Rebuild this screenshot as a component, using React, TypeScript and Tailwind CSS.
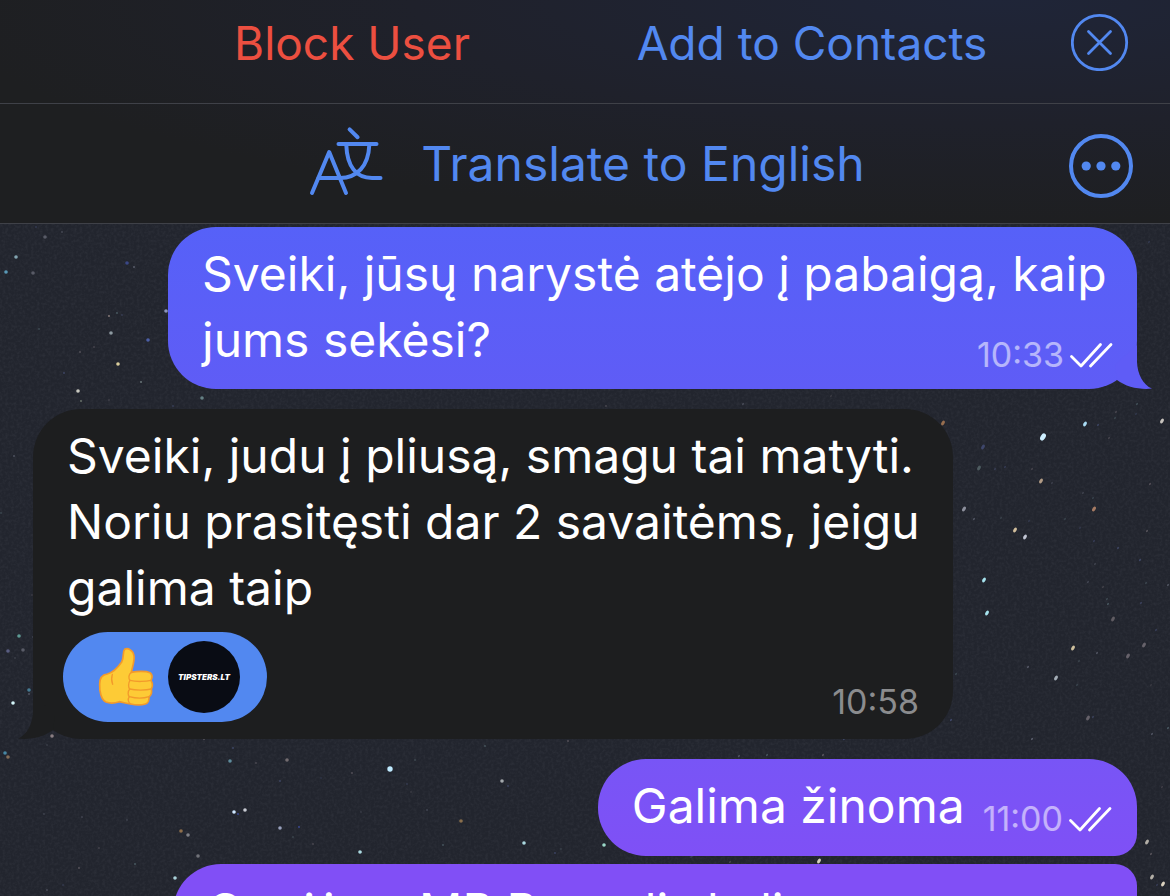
import type { ReactNode } from "react";

type Star = { x: number; y: number; r: number; color: string; opacity: number };

const STARS: Star[] = [
  { x: 1043, y: 437, r: 3, color: "#cdeeff", opacity: 1 },
  { x: 1085, y: 424, r: 2, color: "#a9dcf5", opacity: 1 },
  { x: 1162, y: 421, r: 2, color: "#d9d4cd", opacity: 0.9 },
  { x: 1041, y: 481, r: 2, color: "#d6b99b", opacity: 0.8 },
  { x: 1094, y: 509, r: 2, color: "#c79070", opacity: 0.8 },
  { x: 964, y: 509, r: 2, color: "#b9bccb", opacity: 0.7 },
  { x: 1015, y: 530, r: 2, color: "#e5cfa9", opacity: 0.9 },
  { x: 1025, y: 537, r: 2, color: "#d3d7e6", opacity: 0.9 },
  { x: 984, y: 580, r: 2, color: "#a6e3ee", opacity: 1 },
  { x: 987, y: 613, r: 2, color: "#a6e3ee", opacity: 1 },
  { x: 1073, y: 648, r: 2, color: "#e0cfa8", opacity: 0.9 },
  { x: 1056, y: 678, r: 2, color: "#c4cfd8", opacity: 0.8 },
  { x: 1113, y: 619, r: 2, color: "#9c8f93", opacity: 0.5 },
  { x: 1128, y: 656, r: 2, color: "#a79ba3", opacity: 0.5 },
  { x: 1144, y: 645, r: 2, color: "#a79ba3", opacity: 0.5 },
  { x: 1088, y: 718, r: 2, color: "#a79ba3", opacity: 0.5 },
  { x: 979, y: 468, r: 2, color: "#77908f", opacity: 0.5 },
  { x: 983, y: 447, r: 2, color: "#5a68a8", opacity: 0.5 },
  { x: 943, y: 423, r: 2, color: "#c98d5c", opacity: 0.7 },
  { x: 1147, y: 842, r: 2, color: "#d8d2c6", opacity: 0.8 },
  { x: 1152, y: 877, r: 2, color: "#d8d2c6", opacity: 0.8 },
  { x: 1163, y: 884, r: 2, color: "#f0e6cf", opacity: 0.9 },
  { x: 16, y: 257, r: 2, color: "#9bc4d2", opacity: 0.8 },
  { x: 6, y: 272, r: 2, color: "#5fa6c6", opacity: 0.9 },
  { x: 45, y: 237, r: 2, color: "#8d909e", opacity: 0.5 },
  { x: 33, y: 273, r: 2, color: "#8d909e", opacity: 0.5 },
  { x: 127, y: 263, r: 2, color: "#40509c", opacity: 0.8 },
  { x: 166, y: 311, r: 2, color: "#a6b2e0", opacity: 0.8 },
  { x: 111, y: 333, r: 2, color: "#a7b7bd", opacity: 0.8 },
  { x: 109, y: 316, r: 1, color: "#bba79f", opacity: 0.7 },
  { x: 148, y: 340, r: 2, color: "#5166b4", opacity: 0.9 },
  { x: 118, y: 364, r: 2, color: "#efe0a9", opacity: 0.9 },
  { x: 78, y: 391, r: 2, color: "#dcdcd0", opacity: 0.9 },
  { x: 81, y: 401, r: 1, color: "#8f9c8c", opacity: 0.7 },
  { x: 141, y: 382, r: 1, color: "#a1b6b4", opacity: 0.6 },
  { x: 202, y: 398, r: 2, color: "#82a6aa", opacity: 0.7 },
  { x: 19, y: 636, r: 2, color: "#6bb8ae", opacity: 0.8 },
  { x: 8, y: 651, r: 2, color: "#7b80b8", opacity: 0.6 },
  { x: 23, y: 650, r: 2, color: "#8d909e", opacity: 0.5 },
  { x: 29, y: 690, r: 2, color: "#4e90ad", opacity: 0.8 },
  { x: 13, y: 703, r: 2, color: "#d4f6fa", opacity: 1 },
  { x: 52, y: 736, r: 2, color: "#b5a3a5", opacity: 0.7 },
  { x: 5, y: 753, r: 2, color: "#4f9fc0", opacity: 0.8 },
  { x: 8, y: 757, r: 2, color: "#ad8a68", opacity: 0.7 },
  { x: 230, y: 761, r: 2, color: "#78b7cb", opacity: 0.7 },
  { x: 390, y: 769, r: 3, color: "#bfeaff", opacity: 1 },
  { x: 287, y: 760, r: 2, color: "#a99b9b", opacity: 0.6 },
  { x: 502, y: 781, r: 2, color: "#c4c9cc", opacity: 0.8 },
  { x: 234, y: 812, r: 2, color: "#cfe8ff", opacity: 1 },
  { x: 245, y: 810, r: 2, color: "#d9dde4", opacity: 0.9 },
  { x: 238, y: 814, r: 1, color: "#4555b5", opacity: 0.8 },
  { x: 181, y: 831, r: 2, color: "#a98152", opacity: 0.8 },
  { x: 188, y: 835, r: 2, color: "#a5a5aa", opacity: 0.7 },
  { x: 198, y: 856, r: 2, color: "#a5a5aa", opacity: 0.6 },
  { x: 280, y: 828, r: 2, color: "#b6bfe0", opacity: 0.8 },
  { x: 299, y: 827, r: 1, color: "#4555b5", opacity: 0.8 },
  { x: 360, y: 852, r: 2, color: "#b9ecf3", opacity: 0.9 },
  { x: 461, y: 821, r: 2, color: "#b58d58", opacity: 0.7 },
  { x: 524, y: 843, r: 2, color: "#b9ecf3", opacity: 0.9 },
  { x: 604, y: 845, r: 2, color: "#a9ecd9", opacity: 0.9 },
  { x: 819, y: 861, r: 2, color: "#e8e2cc", opacity: 0.9 },
  { x: 175, y: 878, r: 2, color: "#b9e4ec", opacity: 0.9 },
];

function faintStars(count: number): Star[] {
  let seed = 7919;
  const next = () => {
    seed = (seed * 16807) % 2147483647;
    return seed / 2147483647;
  };
  const colors = ["#8f93a6", "#6f8b93", "#8a7f86", "#5d6aa0"];
  return Array.from({ length: count }, () => ({
    x: Math.round(next() * 1170),
    y: 226 + Math.round(next() * 670),
    r: 1,
    color: colors[Math.floor(next() * colors.length)],
    opacity: 0.2 + next() * 0.35,
  }));
}

const SKY = faintStars(330).concat(STARS);

function NightSky() {
  return (
    <svg
      className="absolute inset-0 h-full w-full"
      viewBox="0 0 1170 896"
      preserveAspectRatio="xMidYMid slice"
      aria-hidden="true"
    >
      <defs>
        <filter id="grain" x="0" y="0" width="100%" height="100%">
          <feTurbulence type="fractalNoise" baseFrequency="0.35" numOctaves="2" seed="4" />
          <feColorMatrix values="0 0 0 0 0.5  0 0 0 0 0.52  0 0 0 0 0.6  0.9 0 0 0 -0.35" />
        </filter>
      </defs>
      <rect width="1170" height="896" fill="#22252e" />
      <rect width="1170" height="896" filter="url(#grain)" opacity="0.14" />
      {SKY.map((s, i) => (
        <ellipse
          key={i}
          cx={s.x}
          cy={s.y}
          rx={s.x > 700 ? s.r * 0.8 : s.r * 0.9}
          ry={s.x > 700 ? s.r * 1.3 : s.r * 0.9}
          fill={s.color}
          opacity={s.opacity}
          transform={`rotate(${s.x > 700 ? 32 : 0} ${s.x} ${s.y})`}
        />
      ))}
    </svg>
  );
}

function CloseIcon() {
  return (
    <svg className="block size-[58px]" viewBox="0 0 58 58" fill="none" stroke="currentColor" aria-hidden="true">
      <circle cx="28.5" cy="29.5" r="27.2" strokeWidth="2.8" />
      <path d="M17.5 18.5 39.5 40.5M39.5 18.5 17.5 40.5" strokeWidth="2.8" strokeLinecap="round" />
    </svg>
  );
}

function MoreIcon() {
  return (
    <svg className="block size-16" viewBox="0 0 64 64" aria-hidden="true">
      <circle cx="32" cy="32" r="30" fill="none" stroke="currentColor" strokeWidth="4" />
      <circle cx="17.2" cy="32" r="4.6" fill="currentColor" />
      <circle cx="32" cy="32" r="4.6" fill="currentColor" />
      <circle cx="46.8" cy="32" r="4.6" fill="currentColor" />
    </svg>
  );
}

function TranslateIcon() {
  return (
    <svg
      className="mb-1.5 block h-[70px] w-[74px] shrink-0"
      viewBox="309 126 74 70"
      fill="none"
      stroke="currentColor"
      strokeWidth="4"
      strokeLinecap="round"
      strokeLinejoin="round"
      aria-hidden="true"
    >
      <path d="M312 193 329.2 152 346 193" />
      <path d="M318.5 178H340C357 178 368.5 166 369.3 145" />
      <path d="M346.3 145C347 166 356 178 372 178H380.5" />
      <path d="M338.5 144H376.5" />
      <path d="M349.6 129.4 357.6 137.2" />
    </svg>
  );
}

function DoubleCheck() {
  return (
    <svg
      className="block h-[26px] w-[44px]"
      viewBox="0 0 44 26"
      fill="none"
      stroke="#fff"
      strokeWidth="2.8"
      strokeLinecap="round"
      strokeLinejoin="round"
      role="img"
      aria-label="Read"
    >
      <path d="M2.5 14.5 12 24 31.5 2.5" />
      <path d="M21.5 24 42 2.5" />
    </svg>
  );
}

function ThumbsUp() {
  return (
    <svg className="block h-[75px] w-[70px] shrink-0" viewBox="0 0 210 225" role="img" aria-label="Thumbs up">
      <g fill="#fdcb36" stroke="#f39a2b" strokeWidth="5" strokeLinejoin="round" strokeLinecap="round">
        <path d="M52 102C68 98 84 82 95 66C103 51 97 36 104 28C114 22 130 32 132 48C134 64 127 80 124 97C142 93 168 93 180 98C187 104 187 114 183 121C188 130 188 140 184 147C186 158 182 167 177 170C178 180 174 190 166 192C156 195 140 196 122 192C108 190 100 187 88 185C74 190 58 190 48 186C34 180 28 155 29 132C29 112 37 104 52 102Z" />
        <path d="M124 97C115 103 115 115 120 121C114 130 115 142 119 147C112 156 114 166 118 170C112 178 115 188 122 192" fill="none" strokeWidth="4" />
        <path d="M120 121C138 126 168 125 183 121M119 147C138 152 168 151 184 147M118 170C136 175 162 175 177 170" fill="none" strokeWidth="4" />
        <path d="M67 103C64 113 64 123 68 133" fill="none" strokeWidth="4" />
      </g>
    </svg>
  );
}

function Tail({ side }: { side: "left" | "right" }) {
  return (
    <svg
      className={
        side === "right"
          ? "absolute -right-[15px] bottom-0 h-11 w-10 text-[#5f5cf6]"
          : "absolute bottom-0 -left-[15px] h-11 w-10 -scale-x-100 text-[#1d1e1f]"
      }
      viewBox="0 0 40 44"
      fill="currentColor"
      aria-hidden="true"
    >
      <path d="M25 0V17C25.5 29 31 40 40 43.6C28 45 14 42 5 35L3 20Z" />
    </svg>
  );
}

function Stamp({ time, sent }: { time: string; sent?: boolean }) {
  return (
    <span className="flex shrink-0 items-center gap-[5px]">
      <time className={sent ? "text-[34px] leading-10 text-white/55" : "text-[34px] leading-10 text-[#8b8c8e]"}>
        {time}
      </time>
      {sent && <DoubleCheck />}
    </span>
  );
}

function HeaderRow({ children }: { children: ReactNode }) {
  return <div className="relative flex items-center border-b border-[#3f4148]">{children}</div>;
}

export default function App() {
  return (
    <div className="relative flex h-screen flex-col overflow-hidden bg-[#22252e] font-['Inter',sans-serif] text-white">
      <NightSky />

      <header className="relative bg-[#1e1f21] bg-[radial-gradient(ellipse_90%_100%_at_85%_0%,#1f2538_0%,#1f212b_55%,#1e1f2100_100%)] text-[#5288f0]">
        <HeaderRow>
          <div className="grid h-[103px] flex-1 grid-cols-2 items-start pt-2.5 pl-[122px] text-[46px] leading-[66px]">
            <button type="button" className="justify-self-center whitespace-nowrap text-[#ec4f40]">
              Block User
            </button>
            <button type="button" className="justify-self-center whitespace-nowrap">
              Add to Contacts
            </button>
          </div>
          <button type="button" aria-label="Close" className="mr-[41px] ml-[29px] self-start pt-[13px]">
            <CloseIcon />
          </button>
        </HeaderRow>
        <HeaderRow>
          <button
            type="button"
            className="flex h-[119px] flex-1 items-center justify-center gap-[38px] pl-[105px] text-[48px] leading-[66px] whitespace-nowrap"
          >
            <TranslateIcon />
            Translate to English
          </button>
          <button type="button" aria-label="More options" className="mr-[37px] pt-1">
            <MoreIcon />
          </button>
        </HeaderRow>
      </header>

      <main className="relative flex flex-col px-[33px] pt-[3px] text-[48px] leading-[66px]">
        <article className="relative flow-root max-w-[969px] self-end rounded-[48px] bg-linear-to-b from-[#5661f8] to-[#5f5cf6] pt-[14px] pr-6 pb-4 pl-[34px]">
          <p>
            Sveiki, jūsų narystė atėjo į pabaigą, kaip jums sekėsi?
            <span className="float-right mt-7 -mb-0.5">
              <Stamp time="10:33" sent />
            </span>
          </p>
          <Tail side="right" />
        </article>

        <article className="relative mt-5 max-w-[920px] self-start rounded-[48px] bg-[#1d1e1f] pt-[14px] pr-6 pb-[17px] pl-[34px]">
          <p>Sveiki, judu į pliusą, smagu tai matyti. Noriu prasitęsti dar 2 savaitėms, jeigu galima taip</p>
          <div className="mt-[11px] flex items-end justify-between pr-2.5">
            <button
              type="button"
              className="-ml-1 flex h-[90px] w-[204px] items-center justify-between rounded-full bg-[#5288f0] px-[27px]"
            >
              <ThumbsUp />
              <span className="flex size-[72px] items-center justify-center rounded-full bg-[#090c14] text-[8px] leading-none font-black text-white italic">
                TIPSTERS.LT
              </span>
            </button>
            <Stamp time="10:58" />
          </div>
          <Tail side="left" />
        </article>

        <article className="mt-5 flex items-end gap-[18px] self-end rounded-[48px] rounded-br-[22px] bg-linear-to-b from-[#7855f6] to-[#7f50f6] pt-[14px] pr-[25px] pb-[17px] pl-[34px]">
          <p>Galima žinoma</p>
          <Stamp time="11:00" sent />
        </article>

        <article className="mt-2 w-full max-w-[964px] self-end rounded-[48px] rounded-tr-[22px] bg-[#814ff6] px-[34px] pt-[14px] pb-4">
          <p>Gavėjom MP Pasaulis kali</p>
        </article>
      </main>
    </div>
  );
}
